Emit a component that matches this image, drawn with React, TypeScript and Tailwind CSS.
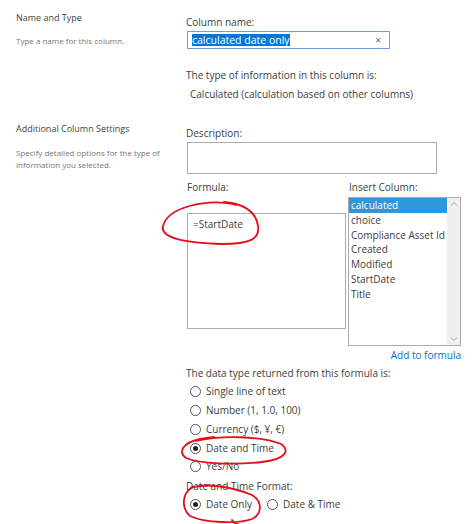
const FONT = { fontFamily: '"Open Sans", "Noto Sans", Arial, sans-serif' };

const columns = ['calculated', 'choice', 'Compliance Asset Id', 'Created', 'Modified', 'StartDate', 'Title'];

const returnTypes = [
  { label: 'Single line of text', checked: false },
  { label: 'Number (1, 1.0, 100)', checked: false },
  { label: 'Currency ($, ¥, €)', checked: false },
  { label: 'Date and Time', checked: true },
  { label: 'Yes/No', checked: false },
];

function Radio({ checked }: { checked: boolean }) {
  return (
    <span className="w-[11px] h-[11px] rounded-full border border-[#555] bg-white flex items-center justify-center shrink-0">
      {checked && <span className="w-[5px] h-[5px] rounded-full bg-[#222]" />}
    </span>
  );
}

function RadioRow({ label, checked }: { label: string; checked: boolean }) {
  return (
    <div className="flex items-center h-[18.75px] pl-[3.5px]">
      <Radio checked={checked} />
      <span className="ml-[5.5px]">{label}</span>
    </div>
  );
}

// hand-drawn red marks over the screenshot
function Annotations() {
  return (
    <svg className="absolute inset-0 pointer-events-none" width="474" height="524" viewBox="0 0 474 524" fill="none">
      <g stroke="#e3101a" strokeWidth="1.8" strokeLinecap="round" strokeLinejoin="round">
        <path d="M 234 204 C 205 199, 168 207, 163 226 C 160 238, 185 243, 222 244 C 250 244, 260 239, 258 226 C 256 212, 246 204, 224 202 L 236 205" />
        <path d="M 196 441 C 220 435, 262 436, 281 444 C 290 450, 287 459, 262 462 C 235 465, 200 464, 186 458 C 178 452, 182 443, 200 439 L 214 437" />
        <path d="M 191 488 C 205 483, 230 486, 252 495 C 263 502, 262 514, 252 519 C 238 524, 205 523, 190 516 C 181 508, 182 494, 192 487 L 210 485" />
        <path d="M 232 520 C 234 523, 236 524, 238 524" />
      </g>
    </svg>
  );
}

export default function App() {
  return (
    <div className="relative w-[474px] h-[524px] overflow-hidden bg-white text-[#3d3d3d]" style={FONT}>
      {/* Name and Type */}
      <div className="flex">
        <div className="w-[186px] pl-[16px] pt-[11px]">
          <div className="text-[9px] leading-[14px] text-[#444]">Name and Type</div>
          <div className="mt-[9px] text-[8px] leading-[14px] text-[#777]">Type a name for this column.</div>
        </div>
        <div className="flex-1 pt-[14px] text-[10px]">
          <div className="leading-[16px]">Column name:</div>
          <div className="mt-px ml-px w-[203px] h-[18px] border border-[#6aa0d8] flex items-center pl-[4px] pr-[8px]">
            <span className="bg-[#0078d7] text-white leading-[12px] text-[10.5px]">calculated date only</span>
            <span className="ml-auto text-[#666] text-[10px] leading-none">×</span>
          </div>
          <div className="mt-[18px] leading-[16px]">The type of information in this column is:</div>
          <div className="mt-[3px] pl-[4px] leading-[16px]">Calculated (calculation based on other columns)</div>
        </div>
      </div>

      {/* Additional Column Settings */}
      <div className="flex mt-[19px]">
        <div className="w-[186px] pl-[16px]">
          <div className="text-[9px] leading-[16px] text-[#444]">Additional Column Settings</div>
          <div className="mt-[10px] text-[8px] leading-[11.5px] text-[#777]">
            Specify detailed options for the type of
            <br />
            information you selected.
          </div>
        </div>
        <div className="flex-1 pt-[4px] text-[10px]">
          <div className="leading-[16px]">Description:</div>
          <div className="mt-px ml-px w-[250px] h-[32px] border border-[#ababab]" />

          <div className="flex mt-[5px]">
            <div className="w-[162px]">
              <div className="leading-[16px] pl-px">Formula:</div>
              <div className="mt-[18px] ml-px w-[159px] h-[116px] border border-[#ababab] pl-[5px] pt-[2px] leading-[16px]">
                =StartDate
              </div>
            </div>
            <div className="flex-1">
              <div className="leading-[16px] pl-px">Insert Column:</div>
              <div className="mt-[2px] w-[113px] h-[149px] border border-[#ababab] flex">
                <div className="flex-1 leading-[14.8px] whitespace-nowrap overflow-hidden">
                  {columns.map((c, i) => (
                    <div key={c} className={i === 0 ? 'bg-[#2f96dc] text-white pl-[2px]' : 'pl-[2px]'}>
                      {c}
                    </div>
                  ))}
                </div>
                <div className="w-[13px] bg-[#f0f0f0] flex flex-col justify-between items-center py-[3px] text-[#a6a6a6]">
                  <svg width="8" height="5" viewBox="0 0 8 5">
                    <path d="M1 4.5 L4 1.5 L7 4.5" stroke="currentColor" strokeWidth="1" fill="none" />
                  </svg>
                  <svg width="8" height="5" viewBox="0 0 8 5">
                    <path d="M1 0.5 L4 3.5 L7 0.5" stroke="currentColor" strokeWidth="1" fill="none" />
                  </svg>
                </div>
              </div>
            </div>
          </div>

          <div className="mt-[2px] w-[275px] text-right leading-[14px] text-[#0072c6]">Add to formula</div>

          <div className="mt-[3px] leading-[16px]">The data type returned from this formula is:</div>
          <div className="mt-[1.6px]">
            {returnTypes.map((t) => (
              <RadioRow key={t.label} label={t.label} checked={t.checked} />
            ))}
          </div>
          <div className="mt-[1.6px] leading-[16px]">Date and Time Format:</div>
          <div className="mt-[1.6px] flex">
            <RadioRow label="Date Only" checked />
            <div className="ml-[11px]">
              <RadioRow label="Date & Time" checked={false} />
            </div>
          </div>
        </div>
      </div>

      <Annotations />
    </div>
  );
}
